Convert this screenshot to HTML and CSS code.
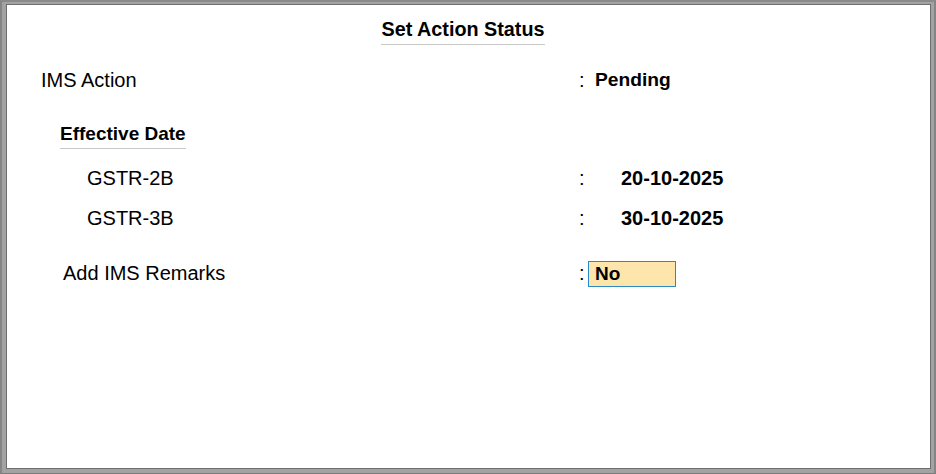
FILE: index.html
```html
<!DOCTYPE html>
<html>
<head>
<meta charset="utf-8">
<link rel="stylesheet" href="styles.css">
</head>
<body>
<div class="frame">
  <div class="panel">
    <div class="title"><span class="title-text">Set Action Status</span></div>
    <div class="row row-action">
      <div class="label">IMS Action</div>
      <div class="colon">:</div>
      <div class="value value-action">Pending</div>
    </div>
    <div class="section"><span class="section-text">Effective Date</span></div>
    <div class="row row-date row-2b">
      <div class="label label-date">GSTR-2B</div>
      <div class="colon">:</div>
      <div class="value value-date">20-10-2025</div>
    </div>
    <div class="row row-date row-3b">
      <div class="label label-date">GSTR-3B</div>
      <div class="colon">:</div>
      <div class="value value-date">30-10-2025</div>
    </div>
    <div class="row row-remarks">
      <div class="label label-remarks">Add IMS Remarks</div>
      <div class="colon">:</div>
      <div class="input">No</div>
    </div>
  </div>
</div>
</body>
</html>
```
FILE: styles.css
```css
* { box-sizing: border-box; }
html, body { margin: 0; height: 100%; }
body {
  background: #a3a3a3;
  font-family: "Liberation Sans", Arial, sans-serif;
  font-size: 20px;
  color: #000;
}
.frame {
  height: 100%;
  border-left: 2px solid #858585;
  border-top: 2px solid #8a8a8a;
  border-right: 2px solid #858585;
  border-bottom: 1px solid #7a7a7a;
  padding: 2px 3px 4px 4px;
}
.panel {
  height: 100%;
  background: #fff;
  border: 1px solid #6e6e6e;
}
.title {
  text-align: center;
  padding-top: 13px;
  padding-right: 11px;
}
.title-text {
  display: inline-block;
  font-weight: bold;
  font-size: 19.8px;
  line-height: 22px;
  padding-bottom: 4px;
  border-bottom: 1px solid #c8c8c8;
}
.row {
  display: flex;
  align-items: center;
  line-height: 22px;
}
.row-action { margin-top: 24px; }
.label { width: 572px; padding-left: 34px; }
.label-date { padding-left: 80px; }
.label-remarks { padding-left: 56px; }
.colon { width: 8px; }
.value { font-weight: bold; font-size: 19.2px; }
.value-action { margin-left: 8px; }
.value-date { margin-left: 34px; font-size: 20px; }
.section {
  margin-top: 31px;
  padding-left: 53px;
}
.section-text {
  display: inline-block;
  font-weight: bold;
  font-size: 19px;
  line-height: 22px;
  padding-bottom: 3px;
  border-bottom: 1px solid #c8c8c8;
}
.row-2b { margin-top: 18px; }
.row-3b { margin-top: 18px; }
.row-remarks { margin-top: 30px; }
.input {
  margin-left: 1px;
  margin-top: 2px;
  width: 88px;
  height: 26px;
  line-height: 24px;
  background: #fde5ab;
  border: 1px solid #2b8ac6;
  padding-left: 6px;
  font-weight: bold;
  font-size: 19px;
}
```
